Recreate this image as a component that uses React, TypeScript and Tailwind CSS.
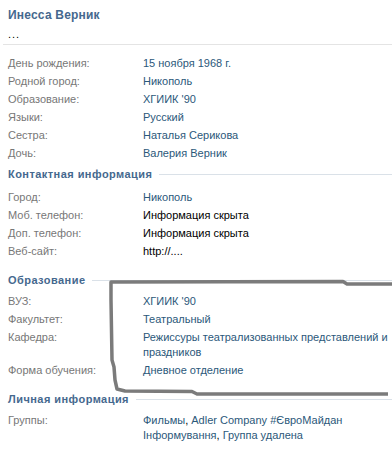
const label = "text-[#777777]";
const link = "text-[#2b587a]";

type Row = { label: string; value: React.ReactNode };

function InfoRows({ rows }: { rows: Row[] }) {
  return (
    <div className="flex flex-col">
      {rows.map((r) => (
        <div key={r.label} className="flex pt-[1.5px] pb-[1.5px] leading-[15px]">
          <div className={`w-[135px] shrink-0 ${label}`}>{r.label}</div>
          <div className="flex-1">{r.value}</div>
        </div>
      ))}
    </div>
  );
}

function SectionHeader({ title, className }: { title: string; className: string }) {
  return (
    <div className={`flex items-center ${className}`}>
      <span className="font-bold tracking-[0.45px] text-[#45688e] leading-[14px]">{title}</span>
      <div className="ml-[7px] h-px flex-1 bg-[#dae1e8]" />
    </div>
  );
}

export default function App() {
  return (
    <div
      className="relative w-[392px] h-[449px] overflow-hidden bg-white text-[11px]"
      style={{ fontFamily: "'Liberation Sans', Arial, sans-serif" }}
    >
      <div className="px-[8px] pt-[8px]">
        <div className="text-[12px] font-bold tracking-[0.2px] leading-[15px] text-[#45688e]">Инесса Верник</div>
        <div className="mt-[4px] text-[11px] tracking-[1px] leading-[14px] text-black">...</div>
      </div>
      <div className="ml-[3px] mt-[3px] h-px bg-[#e4e4e4]" />

      <div className="pl-[8px] pt-[9px]">
        <InfoRows
          rows={[
            { label: "День рождения:", value: <span className={link}>15 ноября 1968 г.</span> },
            { label: "Родной город:", value: <span className={link}>Никополь</span> },
            { label: "Образование:", value: <span className={link}>ХГИИК '90</span> },
            { label: "Языки:", value: <span className={link}>Русский</span> },
            { label: "Сестра:", value: <span className={link}>Наталья Серикова</span> },
            { label: "Дочь:", value: <span className={link}>Валерия Верник</span> },
          ]}
        />

        <SectionHeader title="Контактная информация" className="pt-[5px] pb-[7px]" />
        <InfoRows
          rows={[
            { label: "Город:", value: <span className={link}>Никополь</span> },
            { label: "Моб. телефон:", value: <span className="text-black">Информация скрыта</span> },
            { label: "Доп. телефон:", value: <span className="text-black">Информация скрыта</span> },
            { label: "Веб-сайт:", value: <span className="text-black">http://....</span> },
          ]}
        />

        <SectionHeader title="Образование" className="pt-[13px] pb-[5px]" />
        <InfoRows
          rows={[
            { label: "ВУЗ:", value: <span className={link}>ХГИИК '90</span> },
            { label: "Факультет:", value: <span className={link}>Театральный</span> },
            {
              label: "Кафедра:",
              value: <span className={link}>Режиссуры театрализованных представлений и праздников</span>,
            },
            { label: "Форма обучения:", value: <span className={link}>Дневное отделение</span> },
          ]}
        />

        <SectionHeader title="Личная информация" className="pt-[13px] pb-[5px]" />
        <InfoRows
          rows={[
            {
              label: "Группы:",
              value: (
                <div className="w-[230px] text-black">
                  <span className={link}>Фильмы</span>, <span className={link}>Adler Company #ЄвроМайдан Інформування</span>,{" "}
                  <span className={link}>Группа удалена</span>
                </div>
              ),
            },
          ]}
        />
      </div>

      {/* hand-drawn marker around the education block */}
      <svg
        className="pointer-events-none absolute left-0 top-0"
        width="392"
        height="449"
        viewBox="0 0 392 449"
        fill="none"
      >
        <path
          d="M388 394 L197 394 L192 391.5 L125 391 L117 389 L115 380 L114 367 L112 360 L111 300 L111 282 L343 281.5 L347 284 L392 284"
          stroke="#7b7b7b"
          strokeWidth="3.5"
          strokeLinejoin="round"
        />
      </svg>
    </div>
  );
}
